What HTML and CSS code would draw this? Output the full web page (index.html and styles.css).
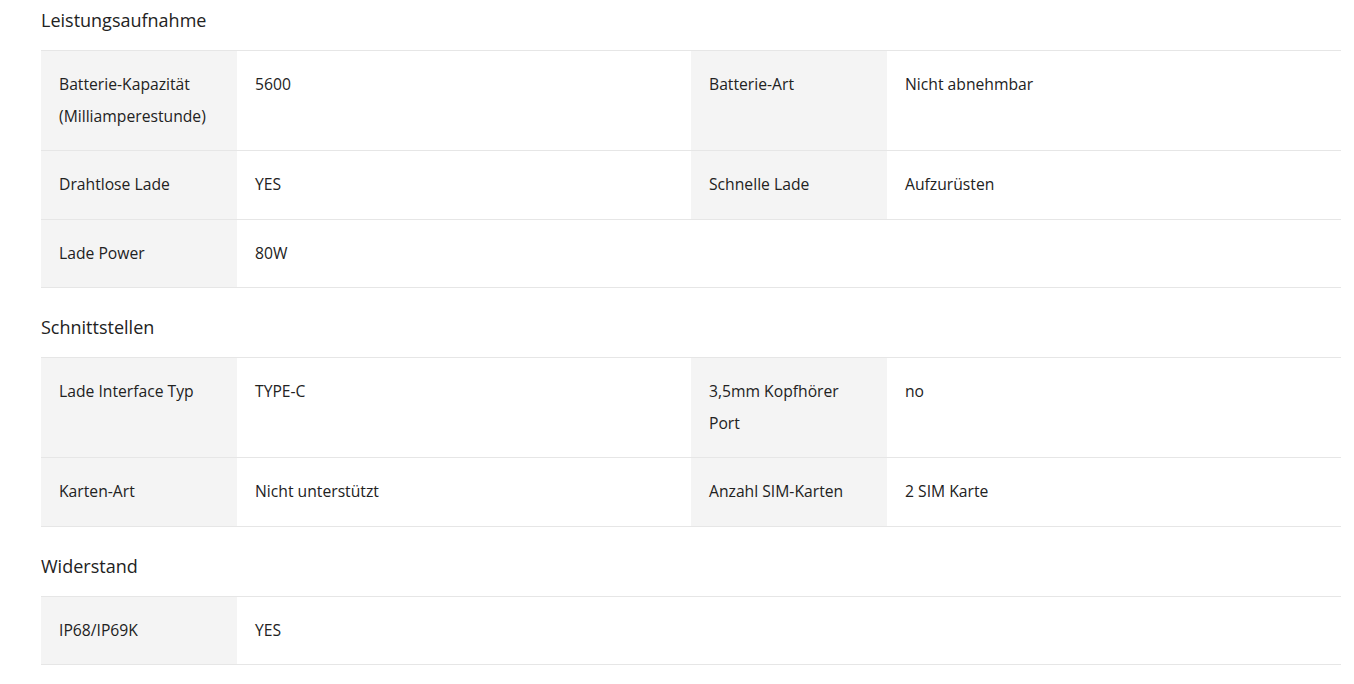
FILE: index.html
```html
<!DOCTYPE html>
<html lang="de">
<head>
<meta charset="utf-8">
<link rel="stylesheet" href="styles.css">
</head>
<body>
<div class="specs">
  <section class="spec">
    <h3 class="spec-title">Leistungsaufnahme</h3>
    <div class="spec-table">
      <div class="spec-row">
        <div class="label">Batterie-Kapazität (Milliamperestunde)</div><div class="value">5600</div>
        <div class="label">Batterie-Art</div><div class="value">Nicht abnehmbar</div>
      </div>
      <div class="spec-row">
        <div class="label">Drahtlose Lade</div><div class="value">YES</div>
        <div class="label">Schnelle Lade</div><div class="value">Aufzurüsten</div>
      </div>
      <div class="spec-row">
        <div class="label">Lade Power</div><div class="value">80W</div>
      </div>
    </div>
  </section>
  <section class="spec">
    <h3 class="spec-title">Schnittstellen</h3>
    <div class="spec-table">
      <div class="spec-row">
        <div class="label">Lade Interface Typ</div><div class="value">TYPE-C</div>
        <div class="label">3,5mm Kopfhörer Port</div><div class="value">no</div>
      </div>
      <div class="spec-row">
        <div class="label">Karten-Art</div><div class="value">Nicht unterstützt</div>
        <div class="label">Anzahl SIM-Karten</div><div class="value">2 SIM Karte</div>
      </div>
    </div>
  </section>
  <section class="spec">
    <h3 class="spec-title">Widerstand</h3>
    <div class="spec-table">
      <div class="spec-row">
        <div class="label">IP68/IP69K</div><div class="value">YES</div>
      </div>
    </div>
  </section>
</div>
</body>
</html>
```
FILE: styles.css
```css
html, body {
  margin: 0;
  padding: 0;
  background: #fff;
}
body {
  font-family: "Open Sans", "Liberation Sans", sans-serif;
  color: #222;
}
.specs {
  width: 1300px;
  margin: 0 0 0 41px;
}
.spec-title {
  margin: 0;
  padding: 24px 0 15px;
  font-size: 18px;
  font-weight: 400;
  line-height: 30px;
  color: #222;
}
.spec:first-child .spec-title {
  padding-top: 5px;
}
.spec-table {
  border-top: 1px solid #e6e6e6;
}
.spec-row {
  display: grid;
  grid-template-columns: 196px 454px 196px 454px;
  border-bottom: 1px solid #e6e6e6;
}
.label,
.value {
  padding: 18.2px 18px 18px;
  font-size: 15.7px;
  line-height: 31.4px;
}
.label {
  background: #f4f4f4;
}
```
